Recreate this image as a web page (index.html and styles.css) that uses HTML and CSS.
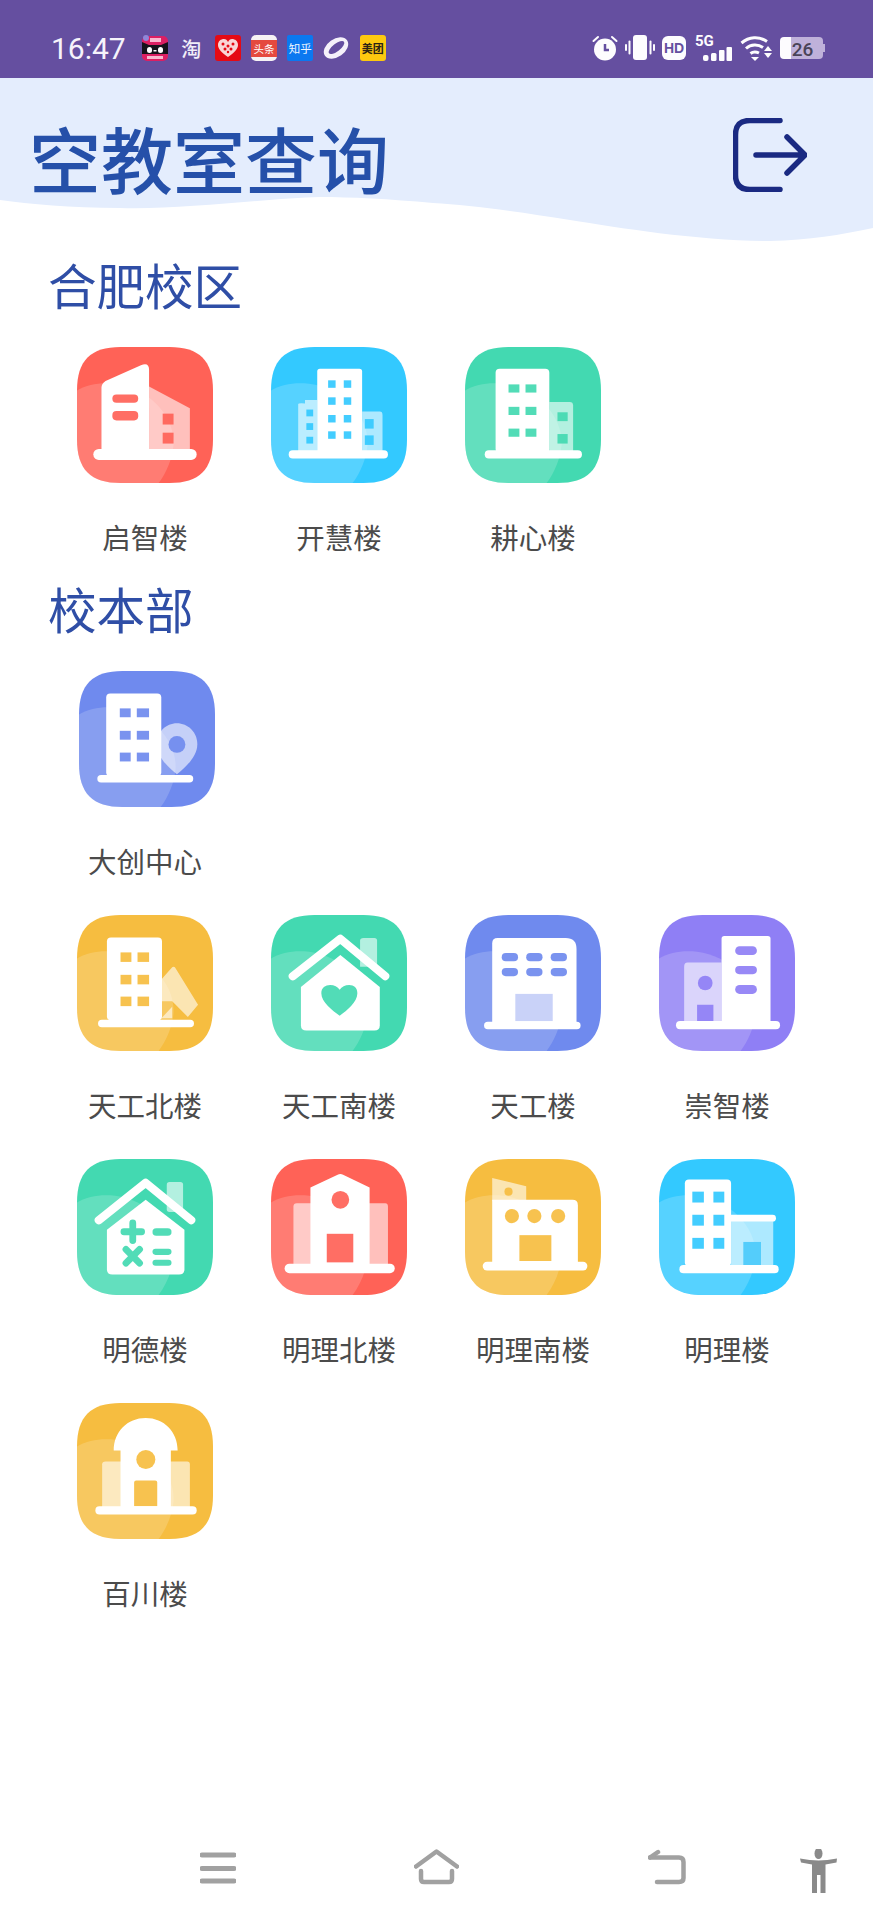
FILE: index.html
```html
<!DOCTYPE html>
<html lang="zh-CN">
<head>
<meta charset="utf-8">
<title>空教室查询</title>
<link rel="stylesheet" href="styles.css">
</head>
<body>
<svg class="defs" xmlns="http://www.w3.org/2000/svg">
  <symbol id="sq" viewBox="0 0 100 100"><path d="M32 0H68C90 0 100 10 100 32V68C100 90 90 100 68 100H32C10 100 0 90 0 68V32C0 10 10 0 32 0Z"/></symbol>
  <symbol id="blob" viewBox="0 0 100 100"><path d="M0 32C8 27 18 26 28 27C52 30 72 50 71 72C70 82 66 92 60 100H32C10 100 0 90 0 68Z"/></symbol>
</svg>

<div class="statusbar">
  <span class="time">16:47</span>
  <div class="notifs">
    <svg class="n" viewBox="0 0 26 26"><rect class="tm-bg" y="1" width="26" height="25" rx="5"/><circle class="tm-dot" cx="4" cy="3" r="3"/><path class="tm-cat" d="M0 7L7 10H19L26 7V19H0Z"/><rect class="tm-eye" x="5" y="12" width="5" height="6" rx="2.5"/><rect class="tm-eye" x="16" y="12" width="5" height="6" rx="2.5"/><rect class="tm-eye" x="11.5" y="15" width="3" height="1.5"/><rect class="tm-txt" x="8" y="3" width="11" height="4"/><rect class="tm-txt" x="5" y="21" width="16" height="3"/></svg>
    <span class="n tao">淘</span>
    <svg class="n" viewBox="0 0 26 26"><rect class="hb-bg" width="26" height="26" rx="3"/><path class="hb-h" d="M13 22C7 18 3 14 3 10C3 6 6 4 9 4C11 4 12 5 13 7C14 5 15 4 17 4C20 4 23 6 23 10C23 14 19 18 13 22Z"/><circle class="hb-d" cx="8" cy="9" r="1.5"/><circle class="hb-d" cx="13" cy="11" r="1.5"/><circle class="hb-d" cx="18" cy="9" r="1.5"/><circle class="hb-d" cx="10" cy="14" r="1.5"/><circle class="hb-d" cx="16" cy="14" r="1.5"/><circle class="hb-d" cx="13" cy="17" r="1.2"/></svg>
    <span class="n tt"><span class="tt-band">头条</span></span>
    <span class="n zh">知乎</span>
    <svg class="n" viewBox="0 0 26 26"><ellipse class="pl" cx="13" cy="13" rx="13.500" ry="9" transform="rotate(-35 13 13)"/><ellipse class="pl-in" cx="13.500" cy="12.500" rx="9.500" ry="3.800" transform="rotate(-38 13.500 12.500)"/></svg>
    <span class="n mt">美团</span>
  </div>
  <div class="sys">
    <svg class="s-alarm" viewBox="0 0 26 26"><circle class="wh" cx="13" cy="14.500" r="11"/><path class="stk-p" d="M13 9V15H17"/><path class="stk-w" d="M1.500 6L6 2M24.500 6L20 2"/></svg>
    <svg class="s-vib" viewBox="0 0 30 26"><rect class="wh" x="8" y="0" width="14" height="25" rx="3"/><rect class="wh" x="0" y="9" width="2" height="7" rx="1"/><rect class="wh" x="3.500" y="5.500" width="2" height="14" rx="1"/><rect class="wh" x="24.500" y="5.500" width="2" height="14" rx="1"/><rect class="wh" x="28" y="9" width="2" height="7" rx="1"/></svg>
    <span class="s-hd">HD</span>
    <div class="s-net">
      <span class="s-5g">5G</span>
      <svg class="s-bars" viewBox="0 0 29 14"><rect class="wh" x="0" y="8" width="5.500" height="6" rx="2"/><rect class="wh" x="8" y="6" width="5.500" height="8" rx="1.500"/><rect class="wh" x="16" y="3" width="5.500" height="11" rx="1"/><rect class="wh" x="23.500" y="0" width="5.500" height="14" rx="1"/></svg>
    </div>
    <svg class="s-wifi" viewBox="0 0 33 26"><path class="stk-w2" d="M1.500 8C9 1.500 19 1 27 6.500M6 13.500C11 9 18 9 23 12.500M10.500 18.500C13 16.500 16 16.500 19 18"/><path class="wh" d="M11 22H19L15 26Z"/><path class="wh" d="M28 11L32 16H24Z"/><path class="wh" d="M24 18H32L28 23Z"/></svg>
    <svg class="s-batt" viewBox="0 0 45 22"><path class="batt-rest" d="M11 0H39Q43 0 43 4V18Q43 22 39 22H11Z"/><path class="wh" d="M4 0H11V22H4Q0 22 0 18V4Q0 0 4 0Z"/><rect class="batt-rest" x="43" y="7" width="2" height="8"/><text class="batt-txt" x="22.500" y="18.500" text-anchor="middle">26</text></svg>
  </div>
</div>

<header class="header">
  <svg class="wave" viewBox="0 0 873 170" width="873" height="170"><path d="M0 0H873V150C840 157 810 162 770 163C700 163 620 150 570 142C520 134 470 127 433 125C390 121 350 119 320 119C270 120 180 132 120 130C70 130 30 126 0 122Z"/></svg>
  <h1 class="title">空教室查询</h1>
  <svg class="logout" viewBox="0 0 74 74" width="74" height="74"><path d="M47 2.500H17Q2.500 2.500 2.500 17V57Q2.500 71.500 17 71.500H47"/><path d="M23 37H71M54 19L72 37L54 55"/></svg>
</header>

<main class="main">
  <section class="section">
    <h2 class="section-title">合肥校区</h2>
    <div class="grid">
      <div class="cell"><svg class="icon red" viewBox="0 0 100 100"><use href="#sq"/><use href="#blob" class="b"/>
        <path class="t" d="M53 29L83 45V78H53Z"/><path class="w" d="M18 30Q18 27 21 25L47 13.500Q53 11 53 17V78H18Z"/>
        <rect class="k" x="26" y="35" width="19" height="6" rx="3"/><rect class="k" x="26" y="47" width="19" height="7" rx="3"/>
        <rect class="k" x="63" y="49" width="8" height="8"/><rect class="k" x="63" y="63" width="8" height="8"/>
        <rect class="w" x="12" y="75" width="76" height="8" rx="4"/></svg><span class="label">启智楼</span></div>
      <div class="cell"><svg class="icon blue" viewBox="0 0 100 100"><use href="#sq"/><use href="#blob" class="b"/>
        <path class="t" d="M25 39H34V78H20V42Q20 41 25 41.500Z"/><path class="t" d="M67 47.500H80Q82 47.500 82 50V78H67Z"/>
        <rect class="w" x="34" y="16" width="33" height="62" rx="2"/>
        <rect class="k" x="42" y="24.500" width="5.500" height="5.500"/><rect class="k" x="53.500" y="24.500" width="5.500" height="5.500"/>
        <rect class="k" x="42" y="37" width="5.500" height="5.500"/><rect class="k" x="53.500" y="37" width="5.500" height="5.500"/>
        <rect class="k" x="42" y="50" width="5.500" height="5.500"/><rect class="k" x="53.500" y="50" width="5.500" height="5.500"/>
        <rect class="k" x="42" y="62" width="5.500" height="5.500"/><rect class="k" x="53.500" y="62" width="5.500" height="5.500"/>
        <rect class="k" x="26" y="46" width="5" height="5"/><rect class="k" x="26" y="56" width="5" height="5"/><rect class="k" x="26" y="66" width="5" height="5"/>
        <rect class="k" x="69" y="53" width="6.500" height="7"/><rect class="k" x="69" y="65" width="6.500" height="7"/>
        <rect class="w" x="13" y="76" width="73" height="6" rx="3"/></svg><span class="label">开慧楼</span></div>
      <div class="cell"><svg class="icon green" viewBox="0 0 100 100"><use href="#sq"/><use href="#blob" class="b"/>
        <path class="t" d="M62 40.500H77Q79.500 40.500 79.500 43V78H62Z"/>
        <rect class="w" x="22.500" y="16" width="39.500" height="62" rx="3"/>
        <rect class="k" x="32" y="27.500" width="8" height="6"/><rect class="k" x="44.500" y="27.500" width="8" height="6"/>
        <rect class="k" x="32" y="44" width="8" height="6"/><rect class="k" x="44.500" y="44" width="8" height="6"/>
        <rect class="k" x="32" y="60" width="8" height="6"/><rect class="k" x="44.500" y="60" width="8" height="6"/>
        <rect class="k" x="68" y="48" width="7.500" height="6.500"/><rect class="k" x="68" y="64" width="7.500" height="7"/>
        <rect class="w" x="14.500" y="76" width="71.500" height="6" rx="3"/></svg><span class="label">耕心楼</span></div>
    </div>
  </section>

  <section class="section">
    <h2 class="section-title">校本部</h2>
    <div class="grid">
      <div class="cell"><svg class="icon peri nudge" viewBox="0 0 100 100"><use href="#sq"/><use href="#blob" class="b"/>
        <path class="t" d="M72 38.500C80 38.500 87 45 87 54C87 63 78 71 72 76C66 71 57 63 57 54C57 45 64 38.500 72 38.500Z"/><circle class="k" cx="72" cy="54" r="6.200"/>
        <rect class="w" x="20" y="16.500" width="40.500" height="61" rx="3"/>
        <rect class="k" x="30" y="27.500" width="8" height="6.500"/><rect class="k" x="42.500" y="27.500" width="9" height="6.500"/>
        <rect class="k" x="30" y="44" width="8" height="6.500"/><rect class="k" x="42.500" y="44" width="9" height="6.500"/>
        <rect class="k" x="30" y="60" width="8" height="6.500"/><rect class="k" x="42.500" y="60" width="9" height="6.500"/>
        <rect class="w" x="13.500" y="76.500" width="70.500" height="5.500" rx="2.750"/></svg><span class="label">大创中心</span></div>
      <div class="cell cell-break"><svg class="icon yellow" viewBox="0 0 100 100"><use href="#sq"/><use href="#blob" class="b"/>
        <path class="t" d="M62 47.500L70 38.500Q71 37.500 72 38.500L89 66L81.500 75L70 63.500H62Z"/><path class="t" d="M62 76L70 67.500V76Z"/>
        <rect class="w" x="22" y="16.500" width="40.500" height="61" rx="3"/>
        <rect class="k" x="32" y="27.500" width="8" height="7"/><rect class="k" x="44.500" y="27.500" width="8.500" height="7"/>
        <rect class="k" x="32" y="44" width="8" height="7"/><rect class="k" x="44.500" y="44" width="8.500" height="7"/>
        <rect class="k" x="32" y="60" width="8" height="7"/><rect class="k" x="44.500" y="60" width="8.500" height="7"/>
        <rect class="w" x="15.500" y="77" width="70.500" height="5.500" rx="2.750"/></svg><span class="label">天工北楼</span></div>
      <div class="cell"><svg class="icon green" viewBox="0 0 100 100"><use href="#sq"/><use href="#blob" class="b"/>
        <path class="t" d="M65.500 19Q65.500 17 68 17H76Q78 17 78 19V38H65.500Z"/>
        <path class="w" d="M51 29.500L80 53V81Q80 85 76 85H26Q22 85 22 81V53Z"/>
        <path class="roof" d="M16 45L51 17.500L84 45"/>
        <path class="k" d="M50.500 74C45 70 37 64 37 57.500C37 53.500 40 51.500 43.500 51.500C46.500 51.500 49 53 50.500 55C52 53 54.500 51.500 57.500 51.500C61 51.500 63.500 53.500 63.500 57.500C63.500 64 56 70 50.500 74Z"/></svg><span class="label">天工南楼</span></div>
      <div class="cell"><svg class="icon peri" viewBox="0 0 100 100"><use href="#sq"/><use href="#blob" class="b"/>
        <path class="w" d="M24 17H74Q82 17 82 25V80H20V21Q20 17 24 17Z"/>
        <rect class="k" x="27" y="28" width="12" height="6" rx="3"/><rect class="k" x="45" y="28" width="12" height="6" rx="3"/><rect class="k" x="63" y="28" width="12" height="6" rx="3"/>
        <rect class="k" x="27" y="39" width="12" height="6" rx="3"/><rect class="k" x="45" y="39" width="12" height="6" rx="3"/><rect class="k" x="63" y="39" width="12" height="6" rx="3"/>
        <rect class="door" x="37" y="58" width="27.500" height="20"/>
        <rect class="w" x="14" y="78.500" width="71" height="5.500" rx="2.750"/></svg><span class="label">天工楼</span></div>
      <div class="cell"><svg class="icon purple" viewBox="0 0 100 100"><use href="#sq"/><use href="#blob" class="b"/>
        <path class="t" d="M21 35H46V80H18.500V38Q18.500 35 21 35Z"/><circle class="k" cx="34" cy="50" r="5.400"/><rect class="k" x="28" y="66" width="12" height="13"/>
        <rect class="w" x="46" y="15.500" width="36" height="64" rx="2"/>
        <rect class="k" x="56" y="23" width="16" height="6.500" rx="3.250"/><rect class="k" x="56" y="37.500" width="16" height="6" rx="3"/><rect class="k" x="56" y="51.500" width="16" height="6.500" rx="3.250"/>
        <rect class="w" x="12.500" y="78" width="76.500" height="6" rx="3"/></svg><span class="label">崇智楼</span></div>
      <div class="cell"><svg class="icon green" viewBox="0 0 100 100"><use href="#sq"/><use href="#blob" class="b"/>
        <rect class="t" x="66" y="17" width="12" height="22" rx="2"/>
        <path class="w" d="M50.500 30L79 52V81Q79 85 75 85H26Q22 85 22 81V52Z"/>
        <path class="roof" d="M16 45L50.500 17.500L84 45"/>
        <path class="sym" d="M41 47V60M34.500 53.500H47.500M36 66.500L46 76.500M46 66.500L36 76.500"/>
        <rect class="k" x="55.500" y="51" width="14" height="5.500" rx="2.750"/><rect class="k" x="55.500" y="66" width="14" height="4.500" rx="2.250"/><rect class="k" x="55.500" y="74" width="14" height="4.500" rx="2.250"/></svg><span class="label">明德楼</span></div>
      <div class="cell"><svg class="icon red" viewBox="0 0 100 100"><use href="#sq"/><use href="#blob" class="b"/>
        <path class="t" d="M19 32.500H84Q86 32.500 86 35V80H16.500V35Q16.500 32.500 19 32.500Z"/>
        <path class="w" d="M29 21L49 11.500Q51 10.500 53 11.500L72.500 21V80H29Z"/>
        <circle class="k" cx="51" cy="30" r="6.500"/><rect class="k" x="41" y="55" width="19.500" height="21"/>
        <rect class="w" x="10" y="77" width="81" height="7" rx="3.500"/></svg><span class="label">明理北楼</span></div>
      <div class="cell"><svg class="icon yellow" viewBox="0 0 100 100"><use href="#sq"/><use href="#blob" class="b"/>
        <path class="t" d="M20 14L45 20V31H20Z"/><circle class="k" cx="32" cy="24" r="3"/>
        <path class="w" d="M20 30H79Q83 30 83 34V79H20Z"/>
        <circle class="k" cx="34.500" cy="42" r="5.200"/><circle class="k" cx="51" cy="42" r="5.200"/><circle class="k" cx="68.500" cy="42" r="5.200"/>
        <rect class="k" x="40" y="56" width="23.500" height="19"/>
        <rect class="w" x="13" y="75.500" width="77" height="6.500" rx="3.250"/></svg><span class="label">明理南楼</span></div>
      <div class="cell"><svg class="icon blue" viewBox="0 0 100 100"><use href="#sq"/><use href="#blob" class="b"/>
        <rect class="t" x="53" y="44" width="31" height="35"/><rect class="doorb" x="62" y="61" width="13" height="18"/>
        <rect class="w" x="19" y="15" width="34" height="64" rx="3"/>
        <rect class="w" x="50" y="41" width="36" height="5" rx="2.500"/>
        <rect class="k" x="24.500" y="24" width="8.500" height="8"/><rect class="k" x="40" y="24" width="8" height="8"/>
        <rect class="k" x="24.500" y="41" width="8.500" height="8"/><rect class="k" x="40" y="41" width="8" height="8"/>
        <rect class="k" x="24.500" y="58" width="8.500" height="8"/><rect class="k" x="40" y="58" width="8" height="8"/>
        <rect class="w" x="15" y="78" width="73" height="6" rx="3"/></svg><span class="label">明理楼</span></div>
      <div class="cell"><svg class="icon yellow" viewBox="0 0 100 100"><use href="#sq"/><use href="#blob" class="b"/>
        <path class="t" d="M21 43H81Q83 43 83 45V78H18.500V45Q18.500 43 21 43Z"/>
        <path class="w" d="M27 35C27 21 37 11 50.500 11C64 11 74 21 74 35H69V78H32V35Z"/>
        <circle class="k" cx="50.600" cy="41.500" r="7"/><path class="k" d="M42 58.500Q42 57 43.500 57H57.500Q59 57 59 58.500V76H42Z"/>
        <rect class="w" x="13.500" y="76" width="74.500" height="6" rx="3"/></svg><span class="label">百川楼</span></div>
    </div>
  </section>
</main>

<nav class="navbar">
  <svg class="nav-i nav-menu" viewBox="0 0 36 44" width="36" height="44"><path d="M2 6H34M2 19.500H34M2 32H34"/></svg>
  <svg class="nav-i" viewBox="0 0 45 44" width="45" height="44"><path d="M2 17.500L22.500 2.500L43 17.500"/><path d="M7 22V30Q7 33 10 33H35Q38 33 38 30V22"/></svg>
  <svg class="nav-i" viewBox="0 0 38 44" width="38" height="44"><path d="M2 8.500H31Q35.500 8.500 35.500 13V29Q35.500 33 31 33H9"/><path d="M2 8.500L10 3"/></svg>
  <svg class="nav-p" viewBox="0 0 37 44" width="37" height="44"><ellipse cx="18.500" cy="4.500" rx="4" ry="5.500"/><path d="M0 9.500Q10 11.500 18.500 11.500Q27 11.500 37 9.500L36.500 13.500L25.500 15.500V44H20.500V26H17V44H12V15.500L1 13.500Z"/></svg>
</nav>
</body>
</html>
```
FILE: styles.css
```css
* { box-sizing: border-box; }
html, body { margin: 0; padding: 0; }
body {
  width: 873px;
  height: 1920px;
  background: #fff;
  display: flex;
  flex-direction: column;
  overflow: hidden;
  font-family: "Noto Sans CJK SC", "Noto Sans", sans-serif;
}
.defs { display: none; }

/* status bar */
.statusbar {
  height: 78px;
  flex: none;
  background: #654fa0;
  display: flex;
  align-items: center;
  padding: 18px 48px 0 51px;
}
.time {
  font-family: Roboto, sans-serif;
  font-size: 30px;
  color: #f6f3fb;
  width: 75px;
  margin-right: 16px;
}
.notifs { display: flex; gap: 10.3px; align-items: center; }
.n {
  width: 26px;
  height: 26px;
  display: flex;
  align-items: center;
  justify-content: center;
  flex: none;
}
.tm-bg { fill: #dc1f63; }
.tm-dot { fill: #8f86d8; }
.tm-cat { fill: #15121a; }
.tm-eye { fill: #fff; }
.tm-txt { fill: #f7b9cf; }
.tao { color: #f1edf8; font-size: 20px; font-weight: 500; }
.hb-bg { fill: #e50a14; }
.hb-h { fill: #f9d6d6; }
.hb-d { fill: #e50a14; }
.tt { background: #f6f2f4; border-radius: 5px; }
.tt-band {
  width: 100%;
  background: #e5493f;
  color: #fff;
  font-size: 10.5px;
  line-height: 17px;
  text-align: center;
  white-space: nowrap;
}
.zh {
  background: #0b78f0;
  border-radius: 2px;
  color: #eef6ff;
  font-size: 11.5px;
  white-space: nowrap;
}
.pl { fill: #f5f1fa; }
.pl-in { fill: #654fa0; }
.mt {
  background: #fdc90f;
  border-radius: 3px;
  color: #2b2415;
  font-size: 11px;
  font-weight: 700;
  white-space: nowrap;
}
.sys { margin-left: auto; display: flex; align-items: center; }
.wh { fill: #fdfcfe; }
.s-alarm { width: 26px; height: 26px; margin-right: 7px; }
.stk-p { fill: none; stroke: #654fa0; stroke-width: 2.5; }
.stk-w { fill: none; stroke: #fdfcfe; stroke-width: 2; stroke-linecap: round; }
.s-vib { width: 30px; height: 26px; margin-right: 7px; }
.s-hd {
  width: 24px;
  height: 24px;
  background: #fdfcfe;
  border-radius: 6px;
  color: #654fa0;
  font-family: "Liberation Sans", sans-serif;
  font-weight: 700;
  font-size: 14px;
  line-height: 24px;
  text-align: center;
  margin-right: 9px;
}
.s-net { width: 37px; height: 26px; margin-right: 8px; display: flex; flex-direction: column; }
.s-5g {
  font-family: Roboto, sans-serif;
  font-weight: 700;
  font-size: 15px;
  line-height: 12px;
  color: #fdfcfe;
}
.s-bars { width: 29px; height: 14px; margin-left: 8px; }
.s-wifi { width: 33px; height: 26px; margin-right: 7px; }
.stk-w2 { fill: none; stroke: #fdfcfe; stroke-width: 3; }
.s-batt { width: 45px; height: 22px; }
.batt-rest { fill: #bfb1da; }
.batt-txt {
  font-family: Roboto, sans-serif;
  font-size: 19px;
  font-weight: 500;
  fill: #4a4458;
}

/* header */
.header {
  position: relative;
  height: 175px;
  flex: none;
  display: flex;
  justify-content: space-between;
  align-items: flex-start;
  padding: 43px 66px 0 29px;
}
.wave { position: absolute; left: 0; top: 0; z-index: 0; }
.wave path { fill: #e4edfd; }
.title {
  position: relative;
  margin: 0;
  font-size: 72px;
  line-height: 72px;
  font-weight: 500;
  color: #2550a9;
  white-space: nowrap;
}
.logout {
  position: relative;
  margin-top: -3px;
  fill: none;
  stroke: #1a2a82;
  stroke-width: 5.500;
  stroke-linecap: round;
  stroke-linejoin: round;
}

/* content */
.main { flex: 1; padding: 0 49px 0 48px; }
.section { margin-bottom: 18px; }
.section-title {
  margin: 0 0 30px;
  font-size: 48.5px;
  line-height: 62px;
  padding-bottom: 2px;
  font-weight: 400;
  color: #2f4ea6;
}
.grid {
  display: grid;
  grid-template-columns: repeat(4, 194px);
  row-gap: 32px;
}
.cell { display: flex; flex-direction: column; align-items: center; height: 212px; }
.cell-break { grid-column: 1; }
.icon { width: 136px; height: 136px; flex: none; overflow: visible; }
.nudge { transform: translateX(2px); }
.label {
  margin-top: 33.500px;
  font-size: 28.500px;
  line-height: 40px;
  color: #4b4b4b;
  white-space: nowrap;
}
.red { color: #ff6257; }
.blue { color: #33c9ff; }
.green { color: #43d9b1; }
.peri { color: #6f8aee; }
.yellow { color: #f6bd40; }
.purple { color: #8f7ff5; }
.icon use { fill: currentColor; }
.icon .b { fill: #fff; opacity: .17; }
.w { fill: #fff; }
.t { fill: #fff; opacity: .6; }
.k { fill: currentColor; opacity: .92; }
.door { fill: #c9d2f8; }
.doorb { fill: #54cdfb; }
.roof { fill: none; stroke: #fff; stroke-width: 6; stroke-linecap: round; stroke-linejoin: round; }
.sym { fill: none; stroke: currentColor; stroke-width: 5; stroke-linecap: round; opacity: .92; }

/* nav bar */
.navbar {
  height: 71px;
  flex: none;
  display: grid;
  grid-template-columns: 214px 234px 152px auto;
  padding-left: 200px;
  align-items: start;
}
.nav-i {
  fill: none;
  stroke: #a1a1a1;
  stroke-width: 4.500;
  stroke-linecap: round;
  stroke-linejoin: round;
}
.nav-menu { stroke-width: 5; }
.nav-p { fill: #8a8a8a; }
```
